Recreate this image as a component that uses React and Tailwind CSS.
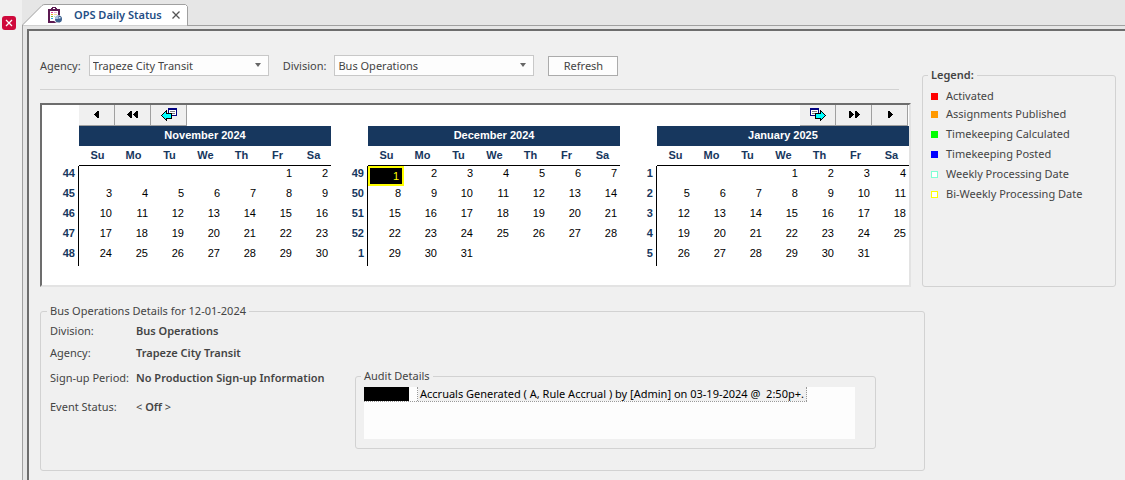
import React, { useState } from 'react';

const DAYS = ['Su', 'Mo', 'Tu', 'We', 'Th', 'Fr', 'Sa'];

const MONTHS = [
    { title: 'November 2024', offset: 5, days: 30, weeks: [44, 45, 46, 47, 48] },
    { title: 'December 2024', offset: 0, days: 31, weeks: [49, 50, 51, 52, 1], selected: 1 },
    { title: 'January 2025', offset: 3, days: 31, weeks: [1, 2, 3, 4, 5] },
];

const LEGEND = [
    { label: 'Activated', swatch: 'bg-[#ff0000]' },
    { label: 'Assignments Published', swatch: 'bg-[#ff9900]' },
    { label: 'Timekeeping Calculated', swatch: 'bg-[#00ff00]' },
    { label: 'Timekeeping Posted', swatch: 'bg-[#0000ff]' },
    { label: 'Weekly Processing Date', swatch: 'border border-[#7fffd4] bg-white' },
    { label: 'Bi-Weekly Processing Date', swatch: 'border border-[#ffff00] bg-white' },
];

const ClipboardIcon = () => (
    <svg width="16" height="17" viewBox="0 0 16 17" shapeRendering="crispEdges" aria-hidden="true">
        <path d="M0 2h12v14H0z" fill="#5c1a52" />
        <path d="M2 4h8v10H2z" fill="#fff" />
        <path d="M3 1h6v3H3zM4 0h4v1H4z" fill="#5c1a52" />
        <path d="M5 1h2v1H5z" fill="#fff" />
        <path d="M3 5h2v1H3z" fill="#e0409a" />
        <path d="M6 5h3v1H6z" fill="#e9a8cf" />
        <path d="M3 7h2v1H3z" fill="#f0a020" />
        <path d="M6 7h3v1H6z" fill="#f3d79a" />
        <path d="M3 9h2v1H3z" fill="#60c040" />
        <path d="M6 9h2v1H6z" fill="#a8dc98" />
        <path d="M3 11h2v1H3z" fill="#30a8e0" />
        <g shapeRendering="auto">
            <circle cx="10" cy="12" r="4" fill="#fff" />
            <circle cx="10.500" cy="12" r="3.500" fill="#3d6290" />
            <path d="M10.500 12V8.500A3.500 3.500 0 0 0 7 12z" fill="#a9c4e2" />
            <path d="M11 10h1.500v1.500H11z" fill="#dce8f5" />
        </g>
    </svg>
);

const Arrow = ({ count = 1, flip }) => (
    <svg width={count * 6} height="8" viewBox={`0 0 ${count * 6} 8`} className={flip ? '-scale-x-100' : ''} shapeRendering="crispEdges" aria-hidden="true">
        <path d="M0 3h1V2h1V1h1V0h2v7H3V6H2V5H1V4H0z" />
        {count === 2 && <path d="M6 3h1V2h1V1h1V0h2v7H9V6H8V5H7V4H6z" />}
    </svg>
);

const GoToDate = ({ flip }) => (
    <svg width="16" height="13" viewBox="0 0 16 13" className={flip ? '-scale-x-100' : ''} shapeRendering="crispEdges" aria-hidden="true">
        <path d="M7 0h9v8H7z" fill="#000080" />
        <path d="M8 2h7v5H8z" fill="#fff" />
        <path d="M9 3h5v1H9zM9 5h5v1H9z" fill="#808080" />
        <path d="M0 7h1V6h1V5h1V4h1V3h1V2h1v3h5v6H6v2H5v-1H4v-1H3v-1H2V9H1V8H0z" fill="#000" />
        <path d="M1 7h1V6h1V5h1V4h1v2h5v4H5v2H5v-1H4v-1H3V9H2V8H1z" fill="#00ffff" />
    </svg>
);

const NavButton = ({ label, children }) => (
    <button type="button" aria-label={label} className="flex h-[21px] w-9 items-center justify-center border-r border-b border-[#a0a0a0] bg-[#f0f0f0] pb-px">
        {children}
    </button>
);

const Field = ({ id, label, value, width }) => (
    <div className="flex items-center">
        <label htmlFor={id}>{label}</label>
        <div className={`relative ml-2 ${width}`}>
            <select id={id} className="h-[21px] w-full appearance-none border border-[#c8c8c8] bg-[#fdfdfd] px-[3px] text-[#444]">
                <option>{value}</option>
            </select>
            <svg width="6" height="4" viewBox="0 0 6 4" className="pointer-events-none absolute top-2 right-2" aria-hidden="true">
                <path d="M0 0h6L3 4z" fill="#666" />
            </svg>
        </div>
    </div>
);

const Month = ({ title, offset, days, weeks, selected }) => (
    <table className="w-[276px] table-fixed border-separate border-spacing-0 font-['Liberation_Sans',Arial,sans-serif] text-[11px] leading-[14px] text-black">
        <colgroup>
            <col className="w-6" />
            {DAYS.map((d) => <col key={d} className="w-9" />)}
        </colgroup>
        <thead>
            <tr className="h-5">
                <td className="p-0" />
                <th colSpan={7} className="bg-[#17375e] p-0 pb-0.5 text-white">{title}</th>
            </tr>
            <tr className="h-5 text-[#17375e]">
                <td className="p-0" />
                {DAYS.map((d) => <th key={d} className="border-b border-black p-0 pb-0.5 pl-px">{d}</th>)}
            </tr>
        </thead>
        <tbody>
            {weeks.map((week, row) => (
                <tr key={week} className="h-5">
                    <th className="border-r border-black p-0 pr-[3px] pb-1.5 text-right text-[#17375e]">{week}</th>
                    {DAYS.map((d, col) => {
                        const day = row * 7 + col - offset + 1;
                        if (day < 1 || day > days) return <td key={d} className="p-0" />;
                        if (day === selected) {
                            return <td key={d} className="border-2 border-[#ffff00] bg-black p-0 pr-[3px] text-right text-[#ffff00]">{day}</td>;
                        }
                        return <td key={d} className="p-0 pr-[3px] pb-1.5 text-right">{day}</td>;
                    })}
                </tr>
            ))}
        </tbody>
    </table>
);

const Group = ({ title, bold, className, children }) => (
    <fieldset className={`rounded-[3px] border border-[#d2d2d2] ${className}`}>
        <legend className={`-ml-[3px] px-[3px] leading-4 ${bold ? 'font-semibold' : ''}`}>{title}</legend>
        {children}
    </fieldset>
);

const DetailRow = ({ label, height, children }) => (
    <div className={`flex ${height}`}>
        <dt className="w-[86px] shrink-0 whitespace-nowrap">{label}</dt>
        <dd className="font-semibold whitespace-nowrap">{children}</dd>
    </div>
);

const App = () => {
    const [tabOpen, setTabOpen] = useState(true);

    return (
        <div className="flex min-h-screen bg-[#f0f0f0] font-['Noto_Sans','Open_Sans',sans-serif] text-[11px] leading-4 text-[#444]">
            <aside className="w-[22px] shrink-0 pt-4 pl-[2px]">
                <button type="button" aria-label="Close panel" className="flex size-[14px] items-center justify-center rounded-[3px] bg-[#cf0a3c]">
                    <svg width="8" height="8" viewBox="0 0 8 8" aria-hidden="true">
                        <path d="M1 1l6 6M7 1L1 7" stroke="#fff" strokeWidth="1.3" />
                    </svg>
                </button>
            </aside>

            <div className="flex min-w-0 flex-1 flex-col">
                <div className="flex h-[26px] bg-[#e6e6e6]">
                    <div className="relative mt-1 flex h-[22px] w-[166px] items-center pl-[26px]">
                        {/* Slanted tab shape */}
                        <svg width="166" height="22" viewBox="0 0 166 22" className="absolute inset-0" aria-hidden="true">
                            <path d="M.5 22v-1L20 1.5Q21 .5 23 .5H163.5L165.5 2.5V22z" fill="#fff" stroke="#a0a0a0" />
                        </svg>
                        <span className="relative"><ClipboardIcon /></span>
                        <span className="relative ml-2.5 font-semibold whitespace-nowrap text-[#1f4e85]">OPS Daily Status</span>
                        {tabOpen && (
                            <button type="button" aria-label="Close tab" className="relative ml-2.5" onClick={() => setTabOpen(false)}>
                                <svg width="8" height="8" viewBox="0 0 8 8" aria-hidden="true">
                                    <path d="M.5.5l7 7M7.500.5l-7 7" stroke="#555" strokeWidth="1.3" />
                                </svg>
                            </button>
                        )}
                    </div>
                    <div className="flex-1 border-b border-[#a0a0a0]" />
                </div>

                <div className="flex flex-1 flex-col border-l border-[#a0a0a0] bg-[#e6e6e6] pt-[3px] pl-1">
                    <main className="flex-1 border-t-2 border-l-2 border-[#6d6d6d] bg-[#f0f0f0] pt-6 pl-[11px]">
                        <div className="flex">
                            <div className="min-w-0 flex-1">
                                <div className="flex items-center gap-[14px]">
                                    <Field id="agency" label="Agency:" value="Trapeze City Transit" width="w-[180px]" />
                                    <Field id="division" label="Division:" value="Bus Operations" width="w-[200px]" />
                                    <button type="button" className="h-5 w-[70px] border border-[#ababab] bg-[#fdfdfd]">Refresh</button>
                                </div>
                                <hr className="mt-[13px] mr-3 border-[#d2d2d2]" />

                                <section className="mt-[13px] h-[184px] border-2 border-t-[#6d6d6d] border-r-[#e3e3e3] border-b-[#e3e3e3] border-l-[#6d6d6d] bg-white">
                                    <div className="flex justify-between pr-px pl-[37px]">
                                        <div className="flex">
                                            <NavButton label="Previous month"><Arrow /></NavButton>
                                            <NavButton label="Previous year"><Arrow count={2} /></NavButton>
                                            <NavButton label="Go back to date"><GoToDate /></NavButton>
                                        </div>
                                        <div className="flex">
                                            <NavButton label="Go forward to date"><GoToDate flip /></NavButton>
                                            <NavButton label="Next year"><Arrow count={2} flip /></NavButton>
                                            <NavButton label="Next month"><Arrow flip /></NavButton>
                                        </div>
                                    </div>
                                    <div className="flex justify-between pl-[13px]">
                                        {MONTHS.map((m) => <Month key={m.title} {...m} />)}
                                    </div>
                                </section>
                            </div>

                            <Group title="Legend:" bold className="mt-3 mr-[9px] ml-[11px] w-[194px] px-2">
                                <ul className="mt-[5px]">
                                    {LEGEND.map(({ label, swatch }) => (
                                        <li key={label} className="flex h-5 items-center gap-2 whitespace-nowrap first:h-4">
                                            <span className={`size-[7px] ${swatch}`} />
                                            {label}
                                        </li>
                                    ))}
                                </ul>
                            </Group>
                        </div>

                        <Group title="Bus Operations Details for 12-01-2024" className="mt-4 mr-[200px] h-[168px] px-[9px]">
                            <div className="flex">
                                <dl className="w-[305px] shrink-0 pt-1">
                                    <DetailRow label="Division:" height="h-[22px]">Bus Operations</DetailRow>
                                    <DetailRow label="Agency:" height="h-[25px]">Trapeze City Transit</DetailRow>
                                    <DetailRow label="Sign-up Period:" height="h-[29px]">No Production Sign-up Information</DetailRow>
                                    <DetailRow label="Event Status:" height="h-4">
                                        <span className="font-normal">&lt;</span> Off <span className="font-normal">&gt;</span>
                                    </DetailRow>
                                </dl>
                                <Group title="Audit Details" className="mt-[49px] mr-[39px] h-[81px] flex-1 px-2">
                                    <div className="mt-[3px] mr-3 h-[52px] bg-[#fdfdfd] text-black">
                                        <div className="flex h-[15px] w-fit border-b border-dotted border-[#999]">
                                            <div className="w-[45px] bg-black" />
                                            <div className="w-[9px] border-r border-dotted border-[#999]" />
                                            <div className="border-r border-dotted border-[#999] bg-[#f0f0f0] px-[2px] leading-[14px] whitespace-pre">
                                                {'Accruals Generated ( A, Rule Accrual ) by [Admin] on 03-19-2024 @  2:50p+.'}
                                            </div>
                                        </div>
                                    </div>
                                </Group>
                            </div>
                        </Group>
                    </main>
                </div>
            </div>
        </div>
    );
};

export default App;
